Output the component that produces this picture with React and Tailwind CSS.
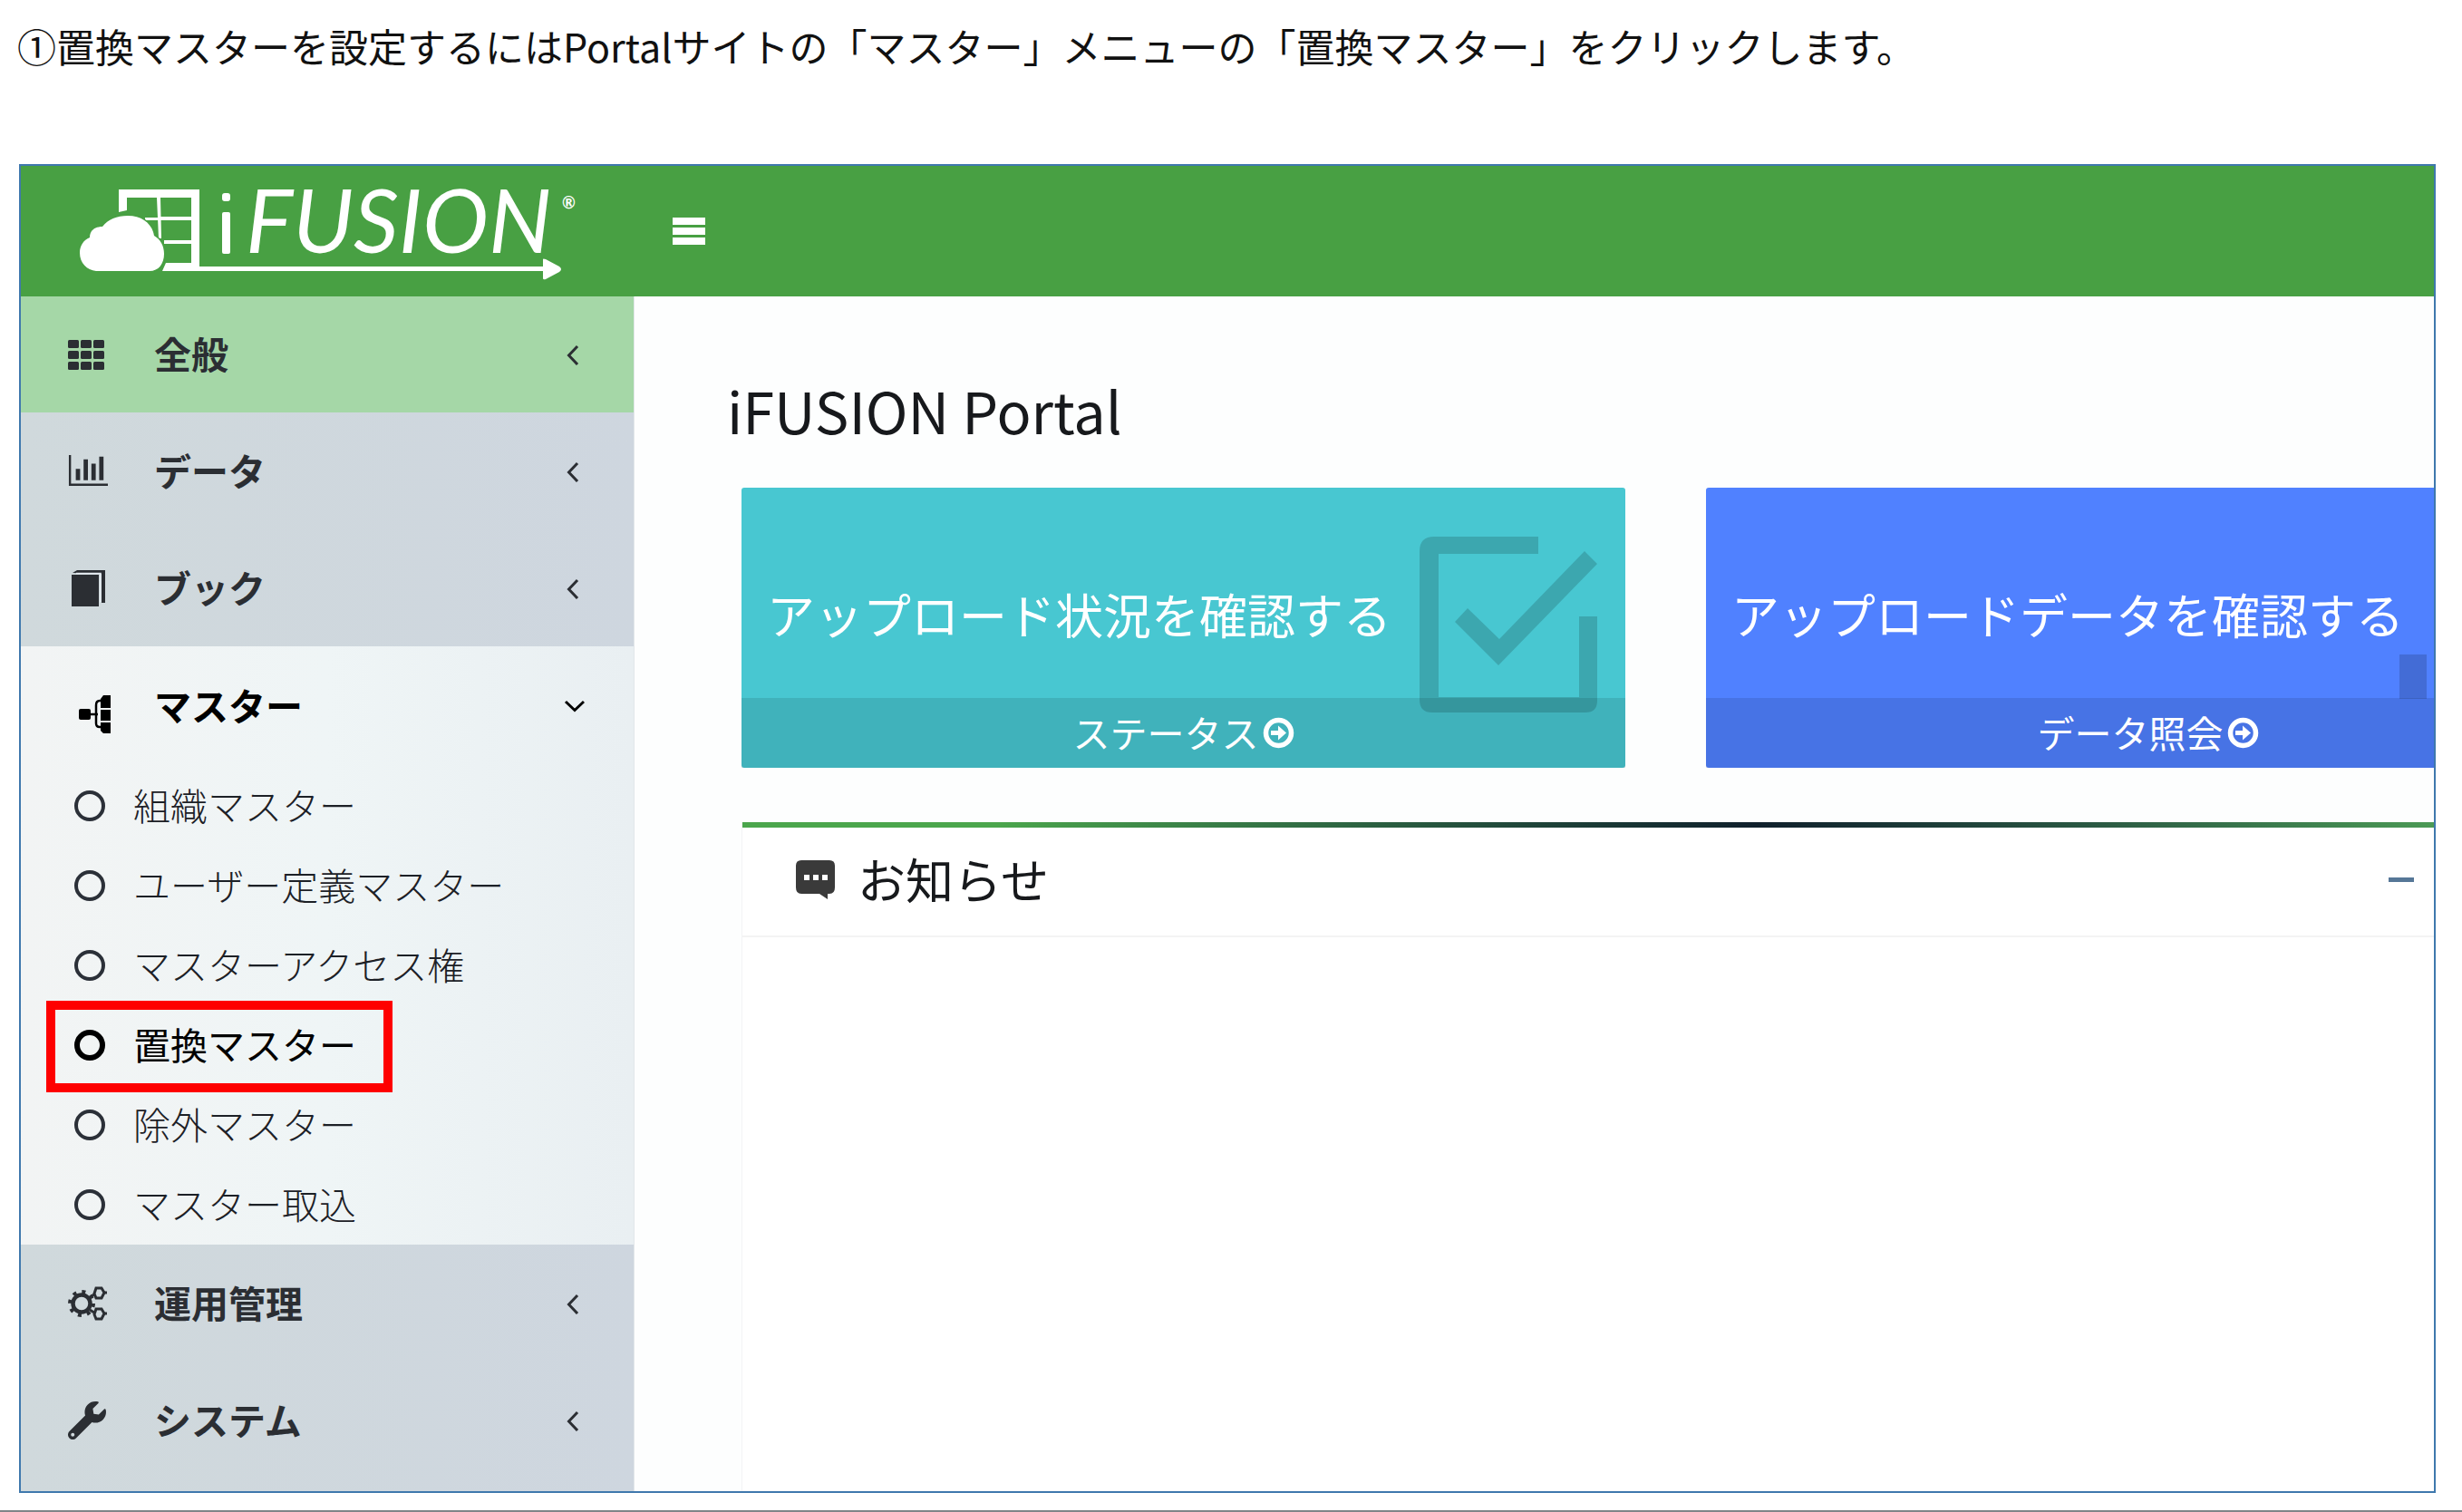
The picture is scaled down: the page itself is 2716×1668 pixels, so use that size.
import React from "react";
import { FaWrench } from "react-icons/fa";

function Logo() {
  return (
    <svg viewBox="84 183 564 144" className="h-36 w-[564px]" role="img" aria-label="iFUSION" fill="#fff">
      <path d="M131 209H220V299H179L183 290H211V218H140V232L131 234Z" />
      <path d="M173 218h4l1 45h-3zM160 240l15 0v-1h36v4h-51zM181 265h30v4h-30z" />
      <path d="M106 299C96 298 88 290 88 279C88 271 92 265 99 262C99 254 105 250 113 250C119 242 129 238 141 238C157 238 168 247 170 260C177 264 181 271 181 280C181 291 175 299 165 299Z" stroke="#48a043" strokeWidth="3" paintOrder="stroke" />
      <path d="M218 294H599V286Q599 285 602 286L617 294Q621 297 617 300L602 308Q599 309 599 307V299H218Z" />
      <rect x="245" y="213" width="9" height="9" rx="3" />
      <rect x="245" y="234" width="9" height="46" rx="2" />
      <text x="271" y="279" fontFamily="Lato, sans-serif" fontSize="98" fontStyle="italic">FUSION</text>
      <text x="620" y="230" fontFamily="Lato, sans-serif" fontSize="18" fontWeight="700">®</text>
    </svg>
  );
}

function GridIcon() {
  return (
    <svg viewBox="0 0 44 34" className="w-11" fill="currentColor">
      {[0, 12, 24].map((y) =>
        [0, 14, 28].map((x) => <rect key={`${x}-${y}`} x={x} y={y + 1} width="12" height="9" rx="1.500" />)
      )}
    </svg>
  );
}

function ChartIcon() {
  return (
    <svg viewBox="0 0 46 38" className="w-11" fill="currentColor">
      <path d="M1 1h2.500v33H46v2.500H1z" />
      <path d="M9 17h5v13H9zM18 6h5v24h-5zM27 11h5v19h-5zM36 3h5v27h-5z" />
    </svg>
  );
}

function BookIcon() {
  return (
    <svg viewBox="0 0 44 42" className="w-11" fill="currentColor">
      <path d="M4 6H34V41H4Z" />
      <path d="M5 4L10 1H41V37H37V5Z" />
      <path d="M9 4.500H36V36" fill="none" stroke="#e4eaf0" strokeWidth="1.500" />
    </svg>
  );
}

function TreeIcon() {
  return (
    <svg viewBox="0 0 48 60" className="h-[60px] w-12" fill="currentColor">
      <path d="M22 39H33M38 24H35Q31 24 31 29V49Q31 53 35 53H38" fill="none" stroke="currentColor" strokeWidth="2.500" />
      <rect x="12" y="33" width="13" height="12" rx="2" />
      <path d="M39 18h8v14H36v-10zM36 34h11v12H36zM36 48h11v12h-8l-3-3z" />
    </svg>
  );
}

function GearsIcon() {
  return (
    <svg viewBox="0 0 44 42" className="h-[42px] w-11" fill="none" stroke="currentColor">
      <circle cx="15" cy="21" r="13" strokeWidth="4" strokeDasharray="4 6.200" />
      <circle cx="15" cy="21" r="9.500" strokeWidth="4.500" />
      <path d="M31 4L37 4L40 9L37 15L31 15L29 10ZM31 27L37 27L40 32L37 38L31 38L29 33Z" strokeWidth="3" />
      <path d="M24 14L29 11M24 28L29 31M40 9h3M40 32h3" strokeWidth="3" />
    </svg>
  );
}

function ArrowCircle() {
  return (
    <svg viewBox="0 0 35 35" className="size-[35px]" fill="none" stroke="currentColor">
      <circle cx="17.500" cy="17.500" r="14" strokeWidth="5.500" />
      <path d="M9 17.500H19" strokeWidth="5" />
      <path d="M17 9.500L26 17.500L17 25.500Z" fill="currentColor" stroke="none" />
    </svg>
  );
}

function Chevron({ open }) {
  return (
    <svg viewBox="0 0 24 24" className="w-6" fill="none" stroke="currentColor" strokeWidth="3">
      <path d={open ? "M3 7L13 16.500L23 7" : "M16 3L6.500 13L16 23"} />
    </svg>
  );
}

function ChatIcon() {
  return (
    <svg viewBox="0 0 45 45" className="w-[45px]" fill="#3a3a3a">
      <path d="M7 1H38Q44 1 44 7V31Q44 38 38 38H36V44L27 38H7Q1 38 1 31V7Q1 1 7 1Z" />
      <path d="M10 17h6v6h-6zM20 17h6v6h-6zM30 17h6v6h-6z" fill="#fff" />
    </svg>
  );
}

function CheckboxIcon() {
  return (
    <svg viewBox="1567 592 197 195" className="w-[197px]" fill="#000" fillOpacity="0.16">
      <path d="M1698 592V611H1588V769H1743V680H1763V773Q1763 786 1750 786H1581Q1567 786 1567 772V608Q1567 592 1583 592Z" />
      <path d="M1749 608L1763 622L1654 734L1606 686L1620 671L1655 705Z" />
    </svg>
  );
}

function BarsIcon() {
  return (
    <svg viewBox="0 0 197 180" className="w-[197px]" fill="#000" fillOpacity="0.16">
      <path d="M17 130h30v49H17zM67 81h30v98H67zM117 105h30v74h-30zM167 31h30v148h-30z" />
    </svg>
  );
}

function Section({ icon, label, open, className = "h-[129px]" }) {
  return (
    <button type="button" aria-expanded={!!open} className={`flex w-full items-center pl-[52px] pr-[54px] text-left ${className}`}>
      <span className="w-[95px] shrink-0">{icon}</span>
      <span className="flex-1 pb-1 text-[41px] leading-[60px] font-bold">{label}</span>
      <Chevron open={open} />
    </button>
  );
}

const masters = ["組織マスター", "ユーザー定義マスター", "マスターアクセス権", "置換マスター", "除外マスター", "マスター取込"];

function MasterLink({ label, selected }) {
  return (
    <li className="relative">
      <a href="#" className={`flex h-[88px] items-center gap-[31px] pl-[59px] text-[41px] leading-[60px] ${selected ? "text-black" : "font-light text-[#1c2026]"}`}>
        <span className={`size-[34px] rounded-full ${selected ? "border-[6px] border-black" : "border-4 border-[#2b3038]"}`} />
        <span className="pb-1">{label}</span>
      </a>
      {selected && <span className="pointer-events-none absolute -top-[5px] -bottom-2 left-7 w-[382px] border-[10px] border-[#fe0000]" />}
    </li>
  );
}

function Card({ title, link, icon, className }) {
  return (
    <section className={`relative w-[975px] shrink-0 rounded-[3px] text-white ${className}`}>
      <h2 className="h-[232px] pt-[99px] pl-7 text-[53px] leading-[80px]">{title}</h2>
      <div className="absolute top-[54px] right-[30px]">{icon}</div>
      <a href="#" className="relative flex h-[77px] items-center justify-center gap-1 bg-black/10 text-[41px] leading-[60px]">
        <span className="pb-1">{link}</span>
        <ArrowCircle />
      </a>
    </section>
  );
}

export default function App() {
  return (
    <div lang="ja" className="flex min-h-screen flex-col border-b-2 border-[#808488] bg-white pr-[29px] pb-[19px] pl-[19px] font-['Noto_Sans_CJK_JP',sans-serif] text-[#17191c]">
      <p className="mt-5 mb-[101px] text-[43px] leading-[60px] text-[#111]">
        ①置換マスターを設定するにはPortalサイトの「マスター」メニューの「置換マスター」をクリックします。
      </p>
      <div className="ml-0.5 flex flex-1 flex-col overflow-hidden border-2 border-[#3f78ad]">
        <header className="flex h-36 items-center bg-[#48a043]">
          <div className="w-[676px] pl-[61px]"><Logo /></div>
          <button type="button" aria-label="メニュー" className="ml-[43px] flex w-9 flex-col gap-[3px]">
            <span className="h-2 bg-white" />
            <span className="h-2 bg-white" />
            <span className="h-2 bg-white" />
          </button>
        </header>
        <div className="flex flex-1">
          <nav className="w-[676px] shrink-0 bg-linear-to-r from-[#d0d9dc] to-[#ced6df] text-[#2b2e33]">
            <Section icon={<GridIcon />} label="全般" className="h-32 bg-[#a5d7a7]" />
            <Section icon={<ChartIcon />} label="データ" />
            <Section icon={<BookIcon />} label="ブック" />
            <div className="bg-linear-to-r from-[#f2f4f4] via-[#eff5f6] to-[#e9eff2]">
              <Section icon={<TreeIcon />} label="マスター" open className="h-[132px] text-black" />
              <ul>
                {masters.map((m) => <MasterLink key={m} label={m} selected={m === "置換マスター"} />)}
              </ul>
            </div>
            <Section icon={<GearsIcon />} label="運用管理" />
            <Section icon={<FaWrench className="size-[42px]" />} label="システム" />
          </nav>
          <main className="flex min-w-0 flex-1 flex-col overflow-hidden border-l border-[#e3e7ea] bg-[#fdfefe] pt-[89px] pl-[118px]">
            <h1 className="-ml-4 text-[63px] leading-[72px]">iFUSION Portal</h1>
            <div className="mt-[50px] flex gap-[89px]">
              <Card title="アップロード状況を確認する" link="ステータス" icon={<CheckboxIcon />} className="bg-[#48c7d1]" />
              <Card title="アップロードデータを確認する" link="データ照会" icon={<BarsIcon />} className="bg-[#5081ff]" />
            </div>
            <section className="mt-[60px] flex-1 border-l border-[#f3f4f5] bg-white">
              <div className="h-[6px] bg-linear-to-r from-[#4ba64c] from-15% via-[#10202c] via-60% to-[#4b9a55]" />
              <div className="flex h-[121px] items-center border-b-2 border-[#f3f3f3] pr-[22px] pb-1 pl-[58px]">
                <ChatIcon />
                <h2 className="ml-6 flex-1 pb-1 text-[53px] leading-[80px]">お知らせ</h2>
                <button type="button" aria-label="折りたたむ" className="flex h-10 w-7 items-center">
                  <span className="h-[5px] w-full bg-[#567797]" />
                </button>
              </div>
            </section>
          </main>
        </div>
      </div>
    </div>
  );
}
